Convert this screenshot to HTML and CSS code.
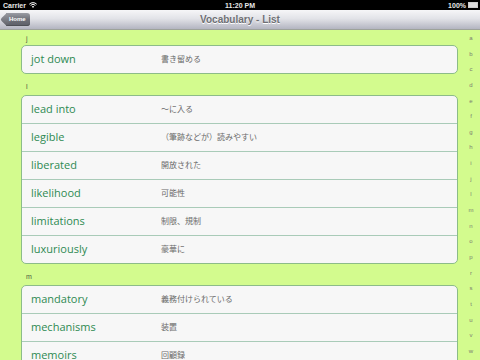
FILE: index.html
```html
<!DOCTYPE html>
<html lang="en">
<head>
    <meta charset="UTF-8">
    <meta name="viewport" content="width=device-width, initial-scale=1.0">
    <title>Vocabulary - List</title>
    <link rel="stylesheet" href="styles.css">
</head>
<body>
    <div class="statusbar">
        <div class="carrier">
            Carrier
            <svg class="wifi" width="8" height="6" viewBox="0 0 8 6">
                <path d="M0.3 2.2 A5.2 5.2 0 0 1 7.7 2.2" stroke="#fff" stroke-width="1" fill="none"/>
                <path d="M1.6 3.4 A3.4 3.4 0 0 1 6.4 3.4" stroke="#fff" stroke-width="1" fill="none"/>
                <path d="M4 6 L2.8 4.6 A1.7 1.7 0 0 1 5.2 4.6 Z" fill="#fff"/>
            </svg>
        </div>
        <div class="clock">11:20 PM</div>
        <div class="battery">
            100%
            <span class="battery-icon"><span class="battery-fill"></span></span>
        </div>
    </div>

    <header class="navbar">
        <a class="back" href="#">Home</a>
        <h1>Vocabulary - List</h1>
    </header>

    <div class="main">
        <div class="list">
            <div class="section-head first">j</div>
            <div class="card">
                <div class="row"><span class="word">jot down</span><span class="meaning">書き留める</span></div>
            </div>

            <div class="section-head">l</div>
            <div class="card">
                <div class="row"><span class="word">lead into</span><span class="meaning">～に入る</span></div>
                <div class="row"><span class="word">legible</span><span class="meaning">（筆跡などが）読みやすい</span></div>
                <div class="row"><span class="word">liberated</span><span class="meaning">開放された</span></div>
                <div class="row"><span class="word">likelihood</span><span class="meaning">可能性</span></div>
                <div class="row"><span class="word">limitations</span><span class="meaning">制限、規制</span></div>
                <div class="row"><span class="word">luxuriously</span><span class="meaning">豪華に</span></div>
            </div>

            <div class="section-head">m</div>
            <div class="card">
                <div class="row"><span class="word">mandatory</span><span class="meaning">義務付けられている</span></div>
                <div class="row"><span class="word">mechanisms</span><span class="meaning">装置</span></div>
                <div class="row"><span class="word">memoirs</span><span class="meaning">回顧録</span></div>
            </div>
        </div>

        <nav class="index">
            <a>a</a><a>b</a><a>c</a><a>d</a><a>e</a><a>f</a><a>g</a>
            <a>h</a><a>i</a><a>j</a><a>l</a><a>m</a><a>n</a><a>o</a>
            <a>p</a><a>r</a><a>s</a><a>t</a><a>u</a><a>v</a><a>w</a>
        </nav>
    </div>
</body>
</html>
```

FILE: styles.css
```css
body, html {
    margin: 0;
    padding: 0;
    height: 100%;
    overflow: hidden;
    font-family: "Liberation Sans", Arial, sans-serif;
    background: #d3fb8e;
}

.statusbar {
    display: flex;
    justify-content: space-between;
    align-items: center;
    height: 10px;
    padding: 0 2px 0 3px;
    background: #000;
    color: #e8e8e8;
    font-size: 7px;
    font-weight: bold;
    position: relative;
}

.carrier {
    display: flex;
    align-items: center;
    gap: 3px;
}

.clock {
    position: absolute;
    left: 0;
    right: 0;
    text-align: center;
}

.battery {
    display: flex;
    align-items: center;
    gap: 2px;
}

.battery-icon {
    display: inline-block;
    width: 8px;
    height: 4px;
    border: 1px solid #ccc;
}

.battery-fill {
    display: block;
    height: 100%;
    background: #ddd;
}

.navbar {
    position: relative;
    display: flex;
    align-items: center;
    justify-content: center;
    height: 19px;
    background: linear-gradient(#f6f6f8, #e2e3e8 45%, #b3b5c1);
    border-bottom: 1px solid #9da29a;
}

.navbar h1 {
    margin: 0;
    font-size: 10px;
    font-weight: bold;
    color: #6e6f74;
    text-shadow: 0 1px 0 #fff;
}

.back {
    position: absolute;
    z-index: 1;
    left: 6px;
    top: 3px;
    height: 13px;
    padding: 0 4px 0 3px;
    line-height: 13px;
    font-size: 6px;
    font-weight: bold;
    color: #fff;
    text-decoration: none;
    background: linear-gradient(#9a9ca3, #6e7079 50%, #5d5f67);
    border-radius: 0 3px 3px 0;
    box-shadow: inset 0 -1px 0 #4d4f55;
}

.back::before {
    content: "";
    position: absolute;
    left: -4px;
    top: 2px;
    width: 9px;
    height: 9px;
    transform: rotate(45deg);
    background: linear-gradient(135deg, #999aa1, #5e6068);
    border-radius: 0 0 0 2px;
    z-index: -1;
}

.main {
    display: flex;
}

.list {
    flex: 1;
    padding: 0 4px 0 21px;
}

.section-head {
    display: flex;
    align-items: flex-end;
    height: 21px;
    padding: 0 0 5px 5px;
    box-sizing: border-box;
    font-size: 7px;
    color: #4e5a44;
}

.section-head.first {
    height: 15px;
    padding-bottom: 3px;
}

.card {
    background: #f7f7f7;
    border: 1px solid #8cbc88;
    border-radius: 5px;
    overflow: hidden;
}

.row {
    display: flex;
    align-items: center;
    height: 28px;
    padding: 0 0 3px 9px;
    box-sizing: border-box;
    border-top: 1px solid #a9cbb8;
}

.row:first-child {
    border-top: none;
    height: 27px;
}

.word {
    width: 130px;
    font-family: "Open Sans", sans-serif;
    font-size: 11px;
    color: #2e8a52;
}

.meaning {
    font-family: "Noto Sans CJK JP", sans-serif;
    font-size: 8px;
    color: #6a6a6a;
}

.index {
    display: flex;
    flex-direction: column;
    align-items: center;
    width: 18px;
    padding-top: 1px;
}

.index a {
    height: 15.65px;
    line-height: 15.65px;
    font-size: 6px;
    color: #7a7f70;
}
```
